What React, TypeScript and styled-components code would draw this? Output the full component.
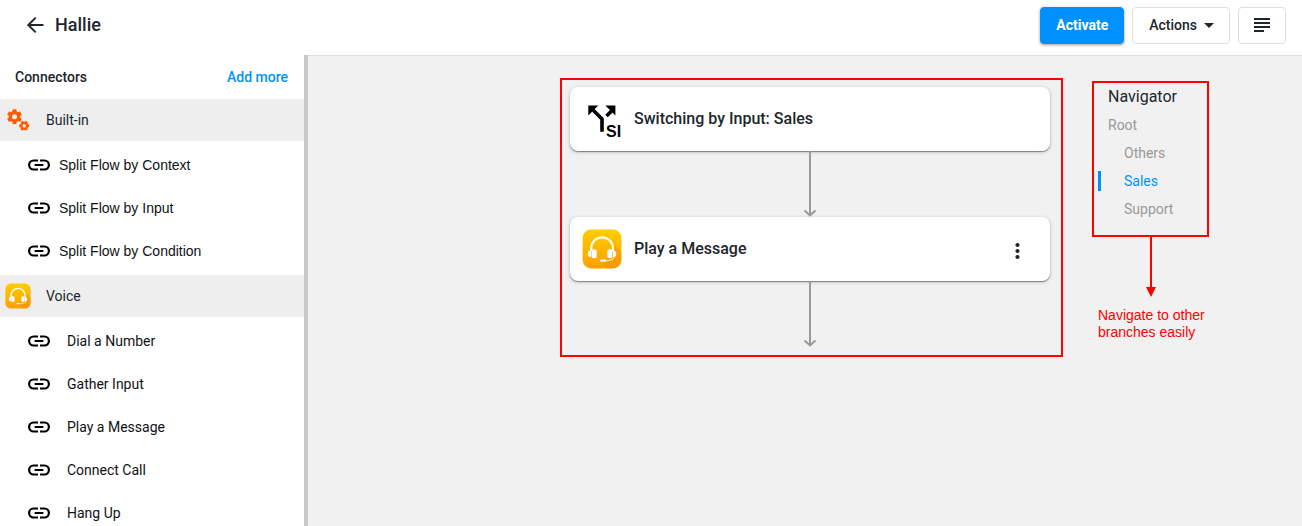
import React from "react";
import styled, { createGlobalStyle } from "styled-components";

const GlobalStyle = createGlobalStyle`
  *, *::before, *::after { box-sizing: border-box; }
  body {
    margin: 0;
    background: #f1f1f1;
    color: #20262d;
    font-family: Roboto, "Liberation Sans", sans-serif;
    font-size: 14px;
    line-height: 20px;
  }
  button { font: inherit; color: inherit; cursor: pointer; }
  ul { list-style: none; margin: 0; padding: 0; }
  a { text-decoration: none; color: inherit; }
  h1, h2, p { margin: 0; }
  svg { display: block; flex: none; }
`;

const Page = styled.div`
  display: flex;
  flex-direction: column;
  height: 100vh;
  overflow: hidden;
`;

const Header = styled.header`
  flex: none;
  display: flex;
  align-items: center;
  justify-content: space-between;
  height: 55px;
  padding: 0 16px 5px 23px;
  background: #fff;
`;

const TitleGroup = styled.div`
  display: flex;
  align-items: center;
  gap: 8px;
`;

const Title = styled.h1`
  font-size: 18px;
  line-height: 24px;
  font-weight: 500;
`;

const IconButton = styled.button`
  display: flex;
  padding: 0;
  border: 0;
  background: none;
`;

const Toolbar = styled.div`
  display: flex;
  gap: 8px;
`;

const ToolButton = styled.button<{ $primary?: boolean; $compact?: boolean }>`
  display: flex;
  align-items: center;
  justify-content: center;
  height: 37px;
  padding: ${(p) => (p.$compact ? "0 11px" : p.$primary ? "0 15px" : "0 8px 0 16px")};
  border: 1px solid ${(p) => (p.$primary ? "#0091ff" : "#dedede")};
  border-radius: 4px;
  background: ${(p) => (p.$primary ? "#0091ff" : "#fff")};
  color: ${(p) => (p.$primary ? "#fff" : "#20262d")};
  font-weight: ${(p) => (p.$primary ? 700 : 500)};
  box-shadow: ${(p) => (p.$primary ? "0 1px 3px rgba(0, 0, 0, 0.4)" : "none")};
`;

const Body = styled.div`
  flex: 1;
  display: flex;
  min-height: 0;
`;

const Sidebar = styled.aside`
  flex: none;
  width: 308px;
  overflow: hidden;
  background: #fff;
  border-right: 4px solid #c8c8c8;
`;

const SidebarHead = styled.div`
  display: flex;
  align-items: center;
  justify-content: space-between;
  height: 44px;
  padding: 0 16px 0 15px;
  font-weight: 500;
`;

const SidebarTitle = styled.h2`
  font-size: 14px;
  line-height: 20px;
  font-weight: 500;
`;

const AddLink = styled.a`
  color: #0091ff;
`;

const SectionHead = styled.div`
  display: flex;
  align-items: center;
  height: 42px;
  background: #eee;
`;

const SectionIcon = styled.span`
  width: 46px;
  padding-left: 5px;
`;

const ItemList = styled.ul`
  padding: 2px 0 3px;
`;

const Item = styled.li<{ $plain?: boolean }>`
  display: flex;
  align-items: center;
  gap: ${(p) => (p.$plain ? "8px" : "16px")};
  height: 43px;
  padding-left: 27px;
  color: #101214;
  ${(p) => p.$plain && `font-family: "Liberation Sans", sans-serif;`}
`;

const Canvas = styled.main`
  flex: 1;
  display: flex;
  align-items: flex-start;
  justify-content: flex-end;
  gap: 29px;
  padding: 22px 93px 0 24px;
  border-top: 1px solid #dedede;
`;

const FlowFrame = styled.section`
  flex: 0 1 503px;
  padding: 7px 11px 8px 8px;
  border: 2px solid #f00;
`;

const Card = styled.article`
  display: flex;
  align-items: center;
  height: 64px;
  padding: 0 20px 0 12px;
  border-radius: 8px;
  background: #fff;
  box-shadow: 0 1px 1px rgba(0, 0, 0, 0.4), 0 1px 4px rgba(0, 0, 0, 0.2);
`;

const CardTitle = styled.h2`
  flex: 1;
  margin-left: 12px;
  font-size: 16px;
  line-height: 24px;
  font-weight: 500;
`;

const Link = styled.div`
  display: flex;
  justify-content: center;
`;

const NavColumn = styled.aside`
  flex: none;
  width: 117px;
  padding-top: 3px;
`;

const Navigator = styled.nav`
  height: 156px;
  padding: 2px 4px;
  border: 2px solid #f00;
`;

const NavTitle = styled.h2`
  margin-bottom: 6px;
  padding-left: 10px;
  font-size: 16px;
  line-height: 24px;
  font-weight: 400;
`;

const NavLink = styled.a<{ $child?: boolean; $active?: boolean }>`
  display: block;
  margin-bottom: 8px;
  padding-left: ${(p) => (p.$child ? "23px" : "7px")};
  border-left: 3px solid ${(p) => (p.$active ? "#0091ff" : "transparent")};
  color: ${(p) => (p.$active ? "#0091ff" : "#999")};
`;

const Note = styled.p`
  margin-top: 10px;
  padding-left: 6px;
  color: #f00;
  font-family: "Liberation Sans", sans-serif;
  line-height: 17px;
`;

const BackIcon = () => (
  <svg width="24" height="24" viewBox="0 0 24 24" fill="none" stroke="#20262d" strokeWidth="2">
    <path d="M20.500 12H5.500M12.700 4.600L5.300 12l7.400 7.400" />
  </svg>
);

const CaretIcon = () => (
  <svg width="24" height="24" viewBox="0 0 24 24" fill="#20262d">
    <path d="M7 10h10l-5 5z" />
  </svg>
);

const NotesIcon = () => (
  <svg width="24" height="24" viewBox="0 0 24 24" fill="#20262d">
    <path d="M4 5h16v2H4zM4 9h16v2H4zM4 13h16v2H4zM4 17h10v2H4z" />
  </svg>
);

const ChainIcon = () => (
  <svg width="24" height="24" viewBox="0 0 24 24" fill="#000">
    <path d="M3.200 12a3.400 3.400 0 0 1 3.400-3.400H11V6.400H6.600a5.600 5.600 0 0 0 0 11.200H11v-2.200H6.600A3.400 3.400 0 0 1 3.200 12zM7.600 13h8.800v-2H7.600zM17.400 6.400H13v2.200h4.400a3.400 3.400 0 0 1 0 6.800H13v2.200h4.400a5.600 5.600 0 0 0 0-11.200z" />
  </svg>
);

const Gear = ({ transform }: { transform: string }) => (
  <g transform={transform} fill="none" stroke="#ff5c00">
    <circle r="4.200" strokeWidth="3.400" />
    {[0, 60, 120, 180, 240, 300].map((angle) => (
      <path key={angle} d="M0 -4.500V-7.400" strokeWidth="3.800" transform={`rotate(${angle})`} />
    ))}
  </g>
);

const GearsIcon = () => (
  <svg width="26" height="26" viewBox="0 0 26 26">
    <Gear transform="translate(9.500 9.700)" />
    <Gear transform="translate(19.200 18.800) rotate(30) scale(.68)" />
  </svg>
);

const HeadsetIcon = ({ size, id }: { size: number; id: string }) => (
  <svg width={size} height={size} viewBox="0 0 40 40">
    <defs>
      <linearGradient id={id} x1="0" y1="0" x2="0" y2="1">
        <stop offset="0" stopColor="#ffcd00" />
        <stop offset="1" stopColor="#ff9f00" />
      </linearGradient>
    </defs>
    <rect x=".6" y=".6" width="38.800" height="38.800" rx="8.500" fill={`url(#${id})`} />
    <path d="M31 15l8.400 8V31a8.400 8.400 0 0 1-8.400 8.400H25L18 32l12-3z" fill="#f08c00" opacity=".4" />
    <path d="M9.200 22v-2.500a10.900 11.200 0 0 1 21.800 0V22" fill="none" stroke="#fffdf0" strokeWidth="2.200" />
    <path d="M32 28.500c-1 2.500-4 3.300-9 3.300" fill="none" stroke="#fffbe0" strokeWidth="1" />
    <rect x="9.700" y="20.300" width="5" height="9" rx="2" fill="#fff" />
    <rect x="25.300" y="20.300" width="5" height="9" rx="2" fill="#fff" />
    <path d="M9.200 21.500v6.800a3.400 3.400 0 0 1 0-6.800zM30.900 21.500v6.800a3.400 3.400 0 0 0 0-6.800z" fill="#fff" />
    <rect x="18" y="30.600" width="6" height="2.200" rx="1.100" fill="#fff" />
  </svg>
);

const SplitIcon = () => (
  <svg width="40" height="44" viewBox="0 -2 40 44">
    <path d="M8.500 8.500L20 20V32.700M24.500 17l6-6" fill="none" stroke="#000" strokeWidth="3.600" />
    <path d="M6.300 6.500h10l-10 10zM23.400 6.500h10v10z" fill="#000" />
    <text x="24" y="37.500" fontFamily="Liberation Sans, sans-serif" fontSize="16" fontWeight="700">
      SI
    </text>
  </svg>
);

const MoreIcon = () => (
  <svg width="24" height="28" viewBox="0 0 24 28" fill="#20262d">
    <circle cx="11.500" cy="10" r="2.100" />
    <circle cx="11.500" cy="16" r="2.100" />
    <circle cx="11.500" cy="22" r="2.100" />
  </svg>
);

const FlowArrow = () => (
  <Link>
    <svg width="14" height="66" viewBox="0 0 14 66" fill="none" stroke="#999" strokeWidth="2">
      <path d="M7 0v64M1.500 59.500L7 64.500l5.500-5" />
    </svg>
  </Link>
);

const NoteArrow = () => (
  <Link>
    <svg width="10" height="60" viewBox="0 0 10 60" fill="#f00">
      <path d="M4 0h2v50h4l-5 10-5-10h4z" />
    </svg>
  </Link>
);

const SECTIONS = [
  {
    name: "Built-in",
    icon: <GearsIcon />,
    plain: true,
    items: ["Split Flow by Context", "Split Flow by Input", "Split Flow by Condition"],
  },
  {
    name: "Voice",
    icon: <HeadsetIcon size={26} id="voice-section" />,
    plain: false,
    items: ["Dial a Number", "Gather Input", "Play a Message", "Connect Call", "Hang Up"],
  },
];

const BRANCHES = ["Others", "Sales", "Support"];

export default function App() {
  return (
    <Page>
      <GlobalStyle />
      <Header>
        <TitleGroup>
          <IconButton aria-label="Back">
            <BackIcon />
          </IconButton>
          <Title>Hallie</Title>
        </TitleGroup>
        <Toolbar>
          <ToolButton $primary>Activate</ToolButton>
          <ToolButton>
            Actions
            <CaretIcon />
          </ToolButton>
          <ToolButton $compact aria-label="Notes">
            <NotesIcon />
          </ToolButton>
        </Toolbar>
      </Header>
      <Body>
        <Sidebar>
          <SidebarHead>
            <SidebarTitle>Connectors</SidebarTitle>
            <AddLink href="#add">Add more</AddLink>
          </SidebarHead>
          {SECTIONS.map((section) => (
            <section key={section.name}>
              <SectionHead>
                <SectionIcon>{section.icon}</SectionIcon>
                {section.name}
              </SectionHead>
              <ItemList>
                {section.items.map((item) => (
                  <Item key={item} $plain={section.plain}>
                    <ChainIcon />
                    {item}
                  </Item>
                ))}
              </ItemList>
            </section>
          ))}
        </Sidebar>
        <Canvas>
          <FlowFrame>
            <Card>
              <SplitIcon />
              <CardTitle>Switching by Input: Sales</CardTitle>
            </Card>
            <FlowArrow />
            <Card>
              <HeadsetIcon size={40} id="voice-card" />
              <CardTitle>Play a Message</CardTitle>
              <IconButton aria-label="More options">
                <MoreIcon />
              </IconButton>
            </Card>
            <FlowArrow />
          </FlowFrame>
          <NavColumn>
            <Navigator>
              <NavTitle>Navigator</NavTitle>
              <NavLink href="#root">Root</NavLink>
              <ul>
                {BRANCHES.map((branch) => (
                  <li key={branch}>
                    <NavLink href={`#${branch}`} $child $active={branch === "Sales"}>
                      {branch}
                    </NavLink>
                  </li>
                ))}
              </ul>
            </Navigator>
            <NoteArrow />
            <Note>Navigate to other branches easily</Note>
          </NavColumn>
        </Canvas>
      </Body>
    </Page>
  );
}
